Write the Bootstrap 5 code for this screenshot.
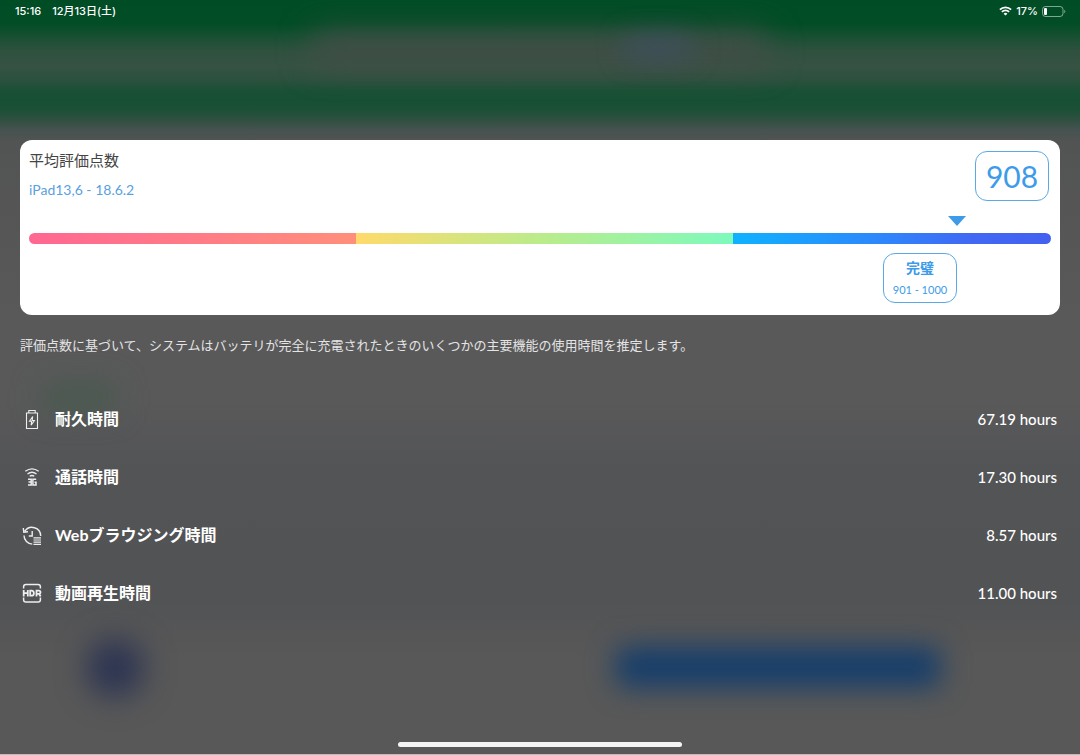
<!DOCTYPE html>
<html lang="ja">
<head>
<meta charset="utf-8">
<meta name="viewport" content="width=device-width, initial-scale=1">
<title>平均評価点数</title>
<link href="https://cdn.jsdelivr.net/npm/bootstrap@5.3.0/dist/css/bootstrap.min.css" rel="stylesheet">
<style>
  :root { --accent: #3d9be9; }
  body {
    font-family: Lato, "Noto Sans CJK JP", sans-serif;
    color: #fff;
    background: #585858;
  }
  .screen {
    position: relative;
    isolation: isolate;
    overflow: hidden;
    border-bottom: 1px solid #bdbdbd;
    background: linear-gradient(#004d25 0, #024d26 24px, #1a5034 38px, #30513f 52px, #365242 66px, #2c513e 80px, #1b5036 90px, #165034 100px, #1c5036 110px, #2f5041 120px, #465250 130px, #525453 142px, #555556 200px, #59595a 320px, #59595a 400px, #535456 470px, #525355 600px, #585858 660px, #585858);
  }
  /* Out-of-focus shapes behind the sheet */
  .haze { position: absolute; z-index: -1; }
  .haze-title { left: 29%; right: 29%; top: 33px; height: 32px; background: #444e48; filter: blur(16px); }
  .haze-link { left: 58%; width: 64px; top: 39px; height: 16px; background: #41506a; filter: blur(14px); }
  .haze-leaf { left: 4%; width: 72px; top: 386px; height: 24px; background: #455a4c; filter: blur(15px); }
  .haze-avatar { left: 8%; width: 58px; bottom: 57px; height: 58px; border-radius: 50%; background: #2c3452; filter: blur(15px); }
  .haze-button { left: 57%; right: 13%; bottom: 67px; height: 40px; border-radius: 8px; background: #143d6b; filter: blur(14px); }

  .status { font: 500 11px/22px Inter, "Noto Sans CJK JP", sans-serif; padding: 0 14px 0 15px; }
  .clock { gap: 11px; }
  .sheet { padding: 118px 20px 0; }
  .score-card { border: 0; border-radius: 12px; color: #444; padding: 11px 9px 12px; }
  .score-title { font-size: 15px; line-height: 18px; font-weight: 400; margin: 0 0 11px; }
  .device { font-size: 14px; line-height: 20px; color: #5a9fdf; }
  .tile { width: 74px; height: 50px; border: 1px solid #5aa8e6; border-radius: 12px; color: var(--accent); }
  .score { font-size: 30px; line-height: 48px; margin-right: 2px; }
  .marker { margin: 15px 0 7px; }
  .marker svg { margin-right: -9px; }
  .scale { height: 11px; border-radius: 6px; margin-bottom: 9px; background: none; }
  .scale-low { background: linear-gradient(90deg, #ff6792, #ff8f7b); }
  .scale-mid { background: linear-gradient(90deg, #ffda6b, #b9ec8c 50%, #7dfabd); }
  .scale-high { background: linear-gradient(90deg, #0fb2ff, #3083fb 50%, #4168f4 75%, #4361f0); }
  .level-name { font-size: 14px; line-height: 22px; font-weight: 700; padding-top: 3px; }
  .level-range { font-size: 11px; line-height: 22px; }
  .note { font-size: 13px; line-height: 20px; color: #e4e4e4; margin: 20px 0 35px; }
  .stat { height: 58px; padding: 0 3px 0 0; }
  .stat dt { font-size: 16px; font-weight: 700; gap: 11px; }
  .stat dd { font-size: 15px; font-weight: 500; }
  .home-bar { width: 284px; height: 5px; border-radius: 3px; background: #f4f4f4; margin-bottom: 7px; }
</style>
</head>
<body>
<div class="screen min-vh-100 d-flex flex-column">
  <div aria-hidden="true">
    <div class="haze haze-title"></div>
    <div class="haze haze-link"></div>
    <div class="haze haze-leaf"></div>
    <div class="haze haze-avatar"></div>
    <div class="haze haze-button"></div>
  </div>

  <header class="status d-flex justify-content-between">
    <div class="clock d-flex"><span>15:16</span><span>12月13日(土)</span></div>
    <div class="d-flex align-items-center gap-1">
      <svg width="13" height="10" viewBox="0 0 13 10" fill="none" stroke="#fff" stroke-width="1.8" aria-hidden="true">
        <path d="M.9 3.6a8 8 0 0 1 11.2 0M2.9 5.8a5.1 5.1 0 0 1 7.2 0"/>
        <path d="M6.5 9.6 4.6 7.7a2.7 2.7 0 0 1 3.8 0z" fill="#fff" stroke="none"/>
      </svg>
      <span>17%</span>
      <svg width="24" height="11" viewBox="0 0 24 11" aria-hidden="true">
        <rect x=".5" y=".5" width="20.5" height="10" rx="3" fill="none" stroke="#fff" stroke-opacity=".5"/>
        <rect x="2" y="2" width="3" height="7" rx="1" fill="#fff"/>
        <path d="M22.3 3.8c1.4.6 1.4 2.8 0 3.4z" fill="#fff" opacity=".55"/>
      </svg>
    </div>
  </header>

  <main class="sheet">
    <section class="card score-card">
      <div class="d-flex justify-content-between align-items-start">
        <div>
          <h1 class="score-title">平均評価点数</h1>
          <div class="device">iPad13,6 - 18.6.2</div>
        </div>
        <div class="tile score text-center">908</div>
      </div>
      <div class="marker d-flex justify-content-end" style="width:90.8%">
        <svg width="18" height="10" viewBox="0 0 18 10" aria-hidden="true"><path d="M0 0h18L9 10z" fill="#3d9be9"/></svg>
      </div>
      <div class="progress scale" role="img" aria-label="908 / 1000">
        <div class="progress-bar scale-low" style="width:32%"></div>
        <div class="progress-bar scale-mid" style="width:36.9%"></div>
        <div class="progress-bar scale-high" style="width:31.1%"></div>
      </div>
      <div class="d-flex justify-content-end" style="width:90.8%">
        <div class="tile text-center">
          <div class="level-name">完璧</div>
          <div class="level-range">901 - 1000</div>
        </div>
      </div>
    </section>

    <p class="note">評価点数に基づいて、システムはバッテリが完全に充電されたときのいくつかの主要機能の使用時間を推定します。</p>

    <dl class="mb-0">
      <div class="stat d-flex justify-content-between align-items-center">
        <dt class="d-flex align-items-center">
          <svg width="24" height="24" viewBox="0 0 24 24" fill="none" stroke="#eee" stroke-width="1.1" aria-hidden="true">
            <path d="M6.500 6h11v15.500h-11zM8.800 6V3.500h6.400V6M12.700 9.500l-3.200 4.700h2.200l-.6 4 3.300-4.700h-2.200z"/>
          </svg>
          耐久時間
        </dt>
        <dd class="mb-0">67.19 hours</dd>
      </div>
      <div class="stat d-flex justify-content-between align-items-center">
        <dt class="d-flex align-items-center">
          <svg width="24" height="24" viewBox="0 0 24 24" fill="none" stroke="#eee" stroke-width="1.3" aria-hidden="true">
            <path d="M5.300 6.300q6.700-5 13.400 0M7.500 8.900q4.500-3.300 9 0M9.700 11.300q2.300-1.600 4.600 0"/>
            <path stroke-width="1.500" d="M8 14.300h3.200v5.700H8M8.500 17.100h2.700M16.200 14.300h-3.300v5.700h3.100v-2.800h-1.500"/>
          </svg>
          通話時間
        </dt>
        <dd class="mb-0">17.30 hours</dd>
      </div>
      <div class="stat d-flex justify-content-between align-items-center">
        <dt class="d-flex align-items-center">
          <svg width="24" height="24" viewBox="0 0 24 24" fill="none" stroke="#eee" stroke-width="1.400" aria-hidden="true">
            <path d="M4.800 8.200A8.700 8.700 0 0 1 20.700 13M4 12.500a8.700 8.700 0 0 0 8.300 8.600M3.300 5l.5 4.300 4.200-.5M12.200 8v5H8.800"/>
            <path d="M13.500 14.800H21M13.500 17H21M13.500 19.200H21M13.500 21.300H21" stroke-width="1.200"/>
          </svg>
          Webブラウジング時間
        </dt>
        <dd class="mb-0">8.57 hours</dd>
      </div>
      <div class="stat d-flex justify-content-between align-items-center">
        <dt class="d-flex align-items-center">
          <svg width="24" height="24" viewBox="0 0 24 24" fill="none" stroke="#eee" stroke-width="1.500" aria-hidden="true">
            <path d="M3.600 7.500V5.800q0-2.300 2.300-2.300h12.200q2.300 0 2.300 2.300v1.700M3.600 16.500v2.200q0 2.300 2.300 2.300h12.200q2.300 0 2.300-2.300v-2.200"/>
            <path stroke-width="1.800" d="M3.700 9v6.400M7.800 9v6.400M3.700 12.200h4.100M10.200 9.600v5.100h1.300q2.400 0 2.400-2.500t-2.400-2.600zM16.500 15.400V9.600h2.300q1.700 0 1.700 1.600t-1.700 1.600h-2.300M18.800 12.800l1.900 2.600"/>
          </svg>
          動画再生時間
        </dt>
        <dd class="mb-0">11.00 hours</dd>
      </div>
    </dl>
  </main>

  <div class="home-bar mt-auto mx-auto"></div>
</div>
<script src="https://cdn.jsdelivr.net/npm/bootstrap@5.3.0/dist/js/bootstrap.bundle.min.js"></script>
</body>
</html>
